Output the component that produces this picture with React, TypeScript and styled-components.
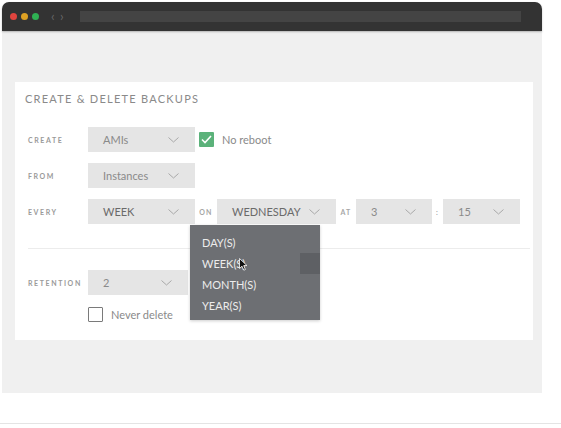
import React from "react";
import styled, { createGlobalStyle } from "styled-components";

const GlobalStyle = createGlobalStyle`
  body {
    margin: 0;
    background: #ffffff;
    font-family: Lato, "Open Sans", sans-serif;
  }
`;

const Chevron = () => (
  <svg width="11" height="6" viewBox="0 0 11 6">
    <path d="M0.5 0.5 L5.5 5 L10.5 0.5" fill="none" stroke="#a8a8a8" strokeWidth="1" />
  </svg>
);

const Check = () => (
  <svg width="11" height="9" viewBox="0 0 11 9">
    <path d="M1 4.5 L4 7.5 L10 1" fill="none" stroke="#ffffff" strokeWidth="1.6" />
  </svg>
);

const Cursor = () => (
  <svg width="9" height="13" viewBox="0 0 9 13">
    <path
      d="M0.5 0.5 L0.5 10.5 L3 8.2 L4.8 12.2 L6.4 11.5 L4.7 7.6 L8 7.6 Z"
      fill="#111"
      stroke="#fff"
      strokeWidth="0.8"
    />
  </svg>
);

const App = () => {
  return (
    <>
      <GlobalStyle />
      <Page>
        <Window>
          <TitleBar>
            <Dot color="#e0443e" />
            <Dot color="#dea123" />
            <Dot color="#2fb153" />
            <Nav>‹ ›</Nav>
            <UrlBar />
          </TitleBar>
          <Content>
            <Card>
              <Title>CREATE &amp; DELETE BACKUPS</Title>
              <Form>
                <Row>
                  <Label>CREATE</Label>
                  <Select width={107}>
                    <span>AMIs</span>
                    <Chevron />
                  </Select>
                  <CheckBox checked>
                    <Check />
                  </CheckBox>
                  <CheckText>No reboot</CheckText>
                </Row>
                <Row>
                  <Label>FROM</Label>
                  <Select width={107}>
                    <span>Instances</span>
                    <Chevron />
                  </Select>
                </Row>
                <Row>
                  <Label>EVERY</Label>
                  <Select width={107} dark>
                    <span>WEEK</span>
                    <Chevron />
                  </Select>
                  <InlineLabel width={22}>ON</InlineLabel>
                  <Select width={119} dark>
                    <span>WEDNESDAY</span>
                    <Chevron />
                  </Select>
                  <InlineLabel width={20}>AT</InlineLabel>
                  <Select width={76}>
                    <span>3</span>
                    <Chevron />
                  </Select>
                  <InlineLabel width={11}>:</InlineLabel>
                  <Select width={77}>
                    <span>15</span>
                    <Chevron />
                  </Select>
                </Row>
                <Divider />
                <Row>
                  <Label>RETENTION</Label>
                  <Select width={100}>
                    <span>2</span>
                    <Chevron />
                  </Select>
                  <Spacer />
                  {/* unit select, covered by the open menu */}
                  <Select width={110}>
                    <span />
                    <Chevron />
                  </Select>
                </Row>
                <CheckRow>
                  <CheckBox />
                  <CheckText>Never delete</CheckText>
                </CheckRow>
              </Form>
              <Menu>
                <MenuItem>DAY(S)</MenuItem>
                <MenuItem active>
                  WEEK(S)
                  <CursorSpot>
                    <Cursor />
                  </CursorSpot>
                </MenuItem>
                <MenuItem>MONTH(S)</MenuItem>
                <MenuItem>YEAR(S)</MenuItem>
              </Menu>
            </Card>
          </Content>
        </Window>
        <BottomLine />
      </Page>
    </>
  );
};

export default App;

const Page = styled.div`
  width: 561px;
  height: 428px;
  padding: 2px 0 0 2px;
  box-sizing: border-box;
  overflow: hidden;
`;

const Window = styled.div`
  width: 540px;
`;

const TitleBar = styled.div`
  height: 29px;
  background: #333333;
  border-radius: 7px 7px 0 0;
  display: flex;
  align-items: center;
  padding: 0 21px 0 8px;
  gap: 4px;
  box-shadow: 0 1px 2px rgba(0, 0, 0, 0.25);
  position: relative;
`;

const Dot = styled.span<{ color: string }>`
  width: 7px;
  height: 7px;
  border-radius: 50%;
  background: ${({ color }) => color};
`;

const Nav = styled.span`
  color: #666666;
  font-size: 13px;
  margin-left: 8px;
  width: 20px;
  line-height: 1;
  letter-spacing: 1px;
`;

const UrlBar = styled.div`
  flex: 1;
  height: 11px;
  margin-left: 5px;
  background: #444444;
`;

const Content = styled.div`
  height: 362px;
  background: #f0f0f0;
  padding: 51px 0 0 13px;
  box-sizing: border-box;
`;

const Card = styled.div`
  position: relative;
  width: 518px;
  height: 258px;
  background: #ffffff;
  box-sizing: border-box;
  padding: 10px 3px 0 10px;
`;

const Title = styled.div`
  font-size: 11px;
  line-height: 14px;
  letter-spacing: 1.25px;
  color: #8a8a8a;
`;

const Form = styled.div`
  padding: 21px 0 0 3px;
`;

const Row = styled.div`
  display: flex;
  align-items: center;
  height: 25px;
  margin-bottom: 11px;
`;

const Label = styled.div`
  width: 60px;
  font-size: 7px;
  font-weight: 700;
  letter-spacing: 1.6px;
  color: #9a9a9a;
`;

const InlineLabel = styled.div<{ width: number }>`
  width: ${({ width }) => width}px;
  text-align: center;
  font-size: 7px;
  font-weight: 700;
  letter-spacing: 1.2px;
  color: #a6a6a6;
`;

const Select = styled.div<{ width: number; dark?: boolean }>`
  width: ${({ width }) => width}px;
  height: 25px;
  box-sizing: border-box;
  background: #e5e5e5;
  display: flex;
  align-items: center;
  justify-content: space-between;
  padding: 0 16px 0 15px;
  font-size: 11px;
  color: ${({ dark }) => (dark ? "#6a6a6a" : "#8a8a8a")};
  flex-shrink: 0;
`;

const Spacer = styled.div`
  width: 2px;
`;

const CheckBox = styled.div<{ checked?: boolean }>`
  width: 15px;
  height: 15px;
  box-sizing: border-box;
  margin-left: ${({ checked }) => (checked ? "4px" : "0")};
  background: ${({ checked }) => (checked ? "#5bb27a" : "#ffffff")};
  border: ${({ checked }) => (checked ? "none" : "1.5px solid #7a7a7a")};
  border-radius: 1px;
  display: flex;
  align-items: center;
  justify-content: center;
`;

const CheckText = styled.span`
  margin-left: 8px;
  font-size: 11px;
  color: #8a8a8a;
`;

const CheckRow = styled.div`
  display: flex;
  align-items: center;
  margin: 12px 0 0 60px;
`;

const Divider = styled.div`
  height: 1px;
  background: #ececec;
  width: 502px;
  margin: 24px 0 21px;
`;

const Menu = styled.div`
  position: absolute;
  left: 175px;
  top: 143px;
  width: 130px;
  height: 95px;
  box-sizing: border-box;
  padding: 7px 0 0;
  background: #6d6f73;
  box-shadow: 0 1px 3px rgba(0, 0, 0, 0.2);
`;

const MenuItem = styled.div<{ active?: boolean }>`
  position: relative;
  height: 21px;
  line-height: 21px;
  padding-left: 12px;
  font-size: 11px;
  color: #ececec;
  background: ${({ active }) =>
    active
      ? "linear-gradient(to right, transparent 110px, #5e6064 110px)"
      : "transparent"};
`;

const CursorSpot = styled.span`
  position: absolute;
  left: 49px;
  top: 5px;
  line-height: 0;
`;

const BottomLine = styled.div`
  height: 1px;
  background: #e4e4e4;
  margin: 30px 0 0 -2px;
  width: 561px;
`;
